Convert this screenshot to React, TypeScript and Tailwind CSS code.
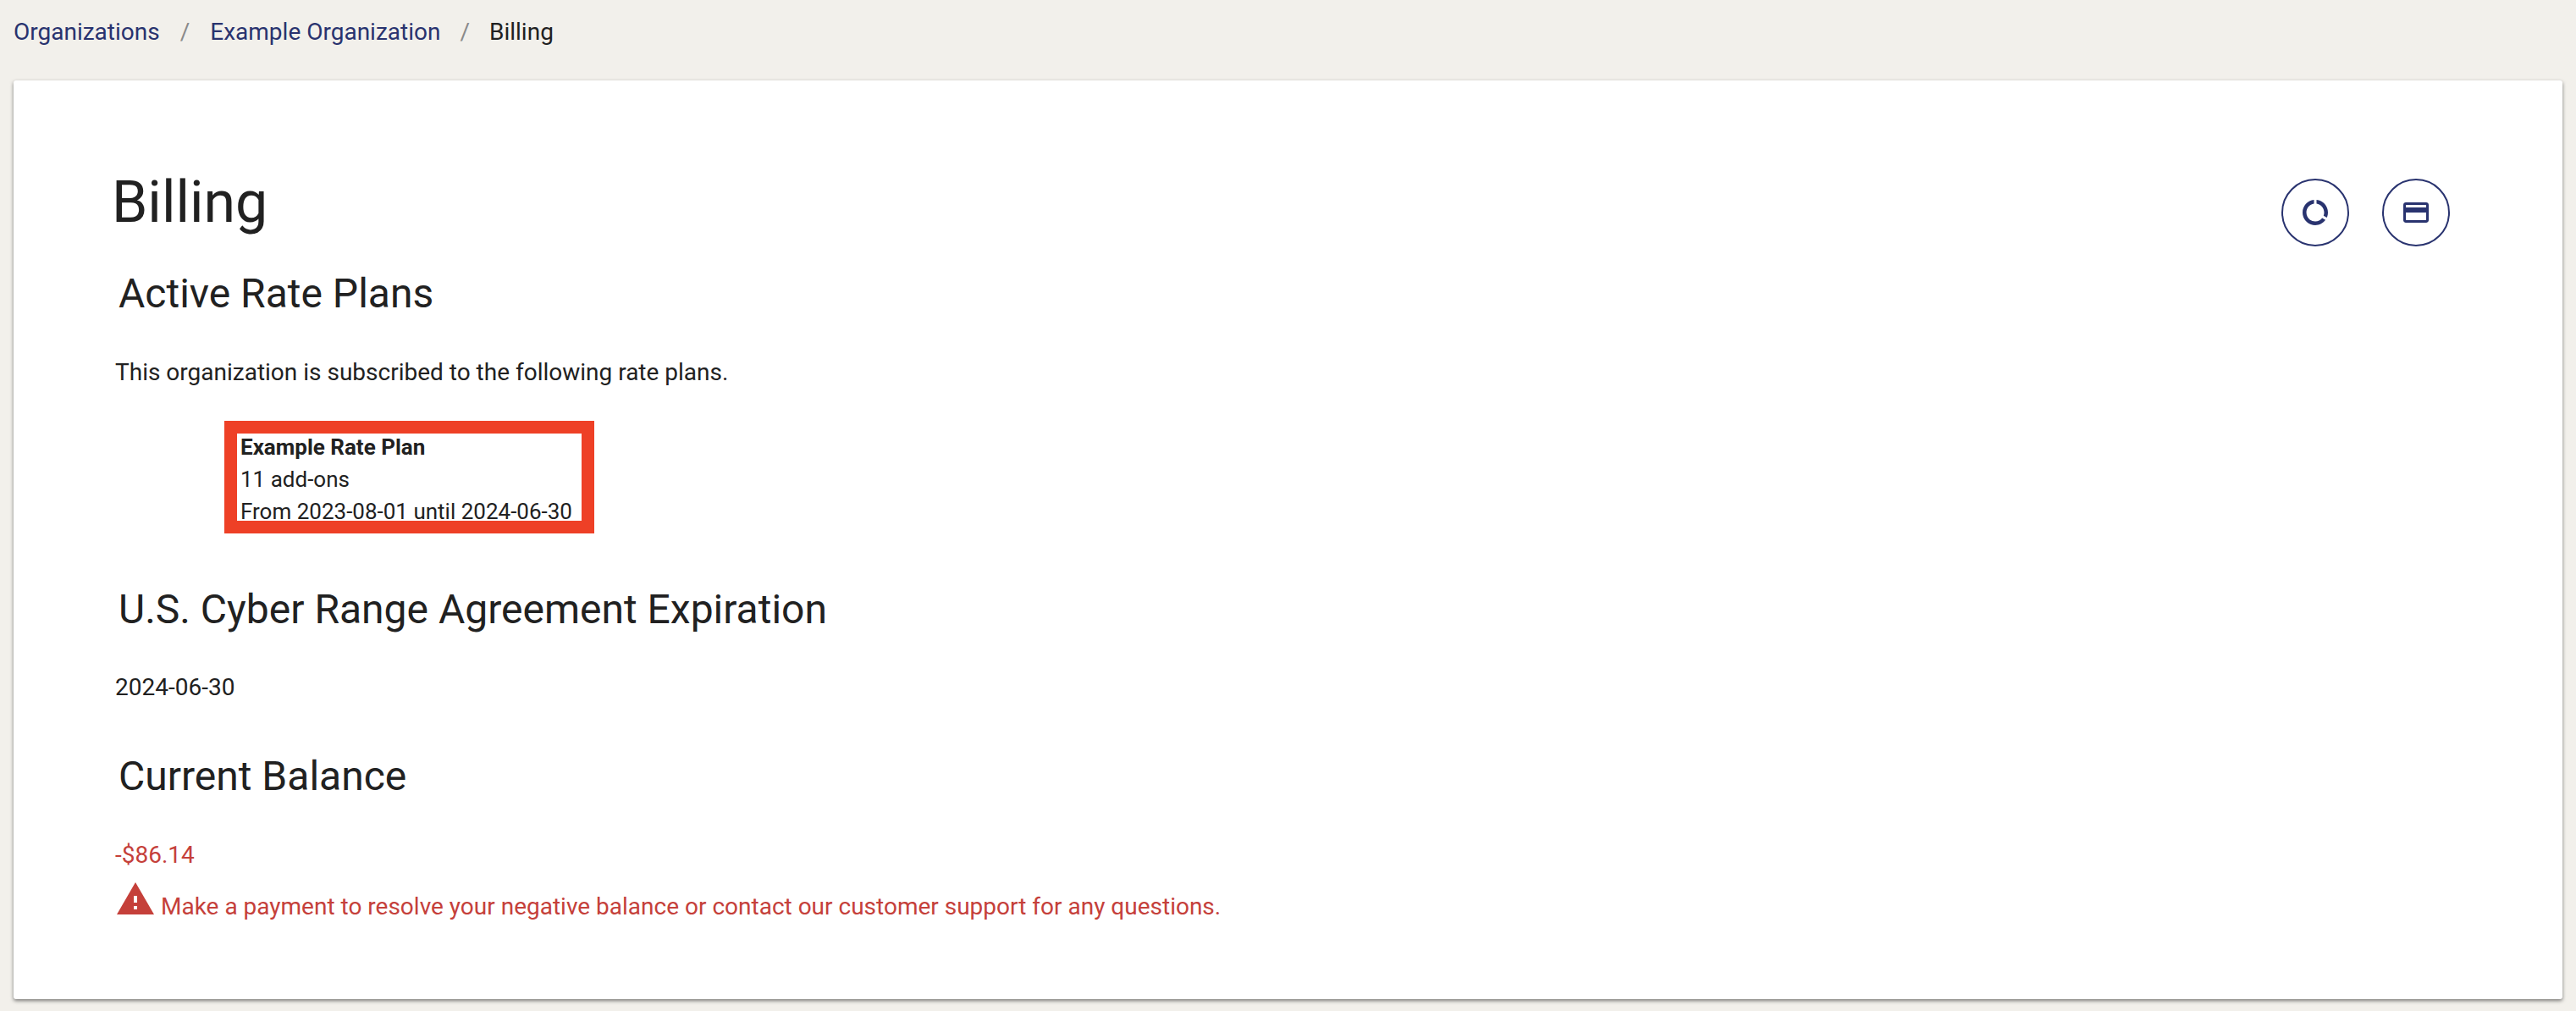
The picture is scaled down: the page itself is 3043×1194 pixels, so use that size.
import { MdDataUsage, MdOutlineCreditCard } from 'react-icons/md'

function Crumbs() {
  return (
    <nav className="flex h-[95px] items-start pl-4 pt-[19px] text-[28px] leading-[38px]">
      <a className="text-[#29336f]">Organizations</a>
      <span className="mx-[24px] text-[#8a8a8a]">/</span>
      <a className="text-[#29336f]">Example Organization</a>
      <span className="mx-[23px] text-[#8a8a8a]">/</span>
      <span>Billing</span>
    </nav>
  )
}

function RoundButton({ children }: { children: React.ReactNode }) {
  return (
    <button className="flex h-20 w-20 items-center justify-center rounded-full border-2 border-[#29336f] text-[#29336f]">
      {children}
    </button>
  )
}

export default function App() {
  return (
    <div className="h-[1194px] bg-[#f2f0eb] font-['Roboto',sans-serif] text-[#212121]">
      <Crumbs />
      <main className="mx-4 h-[1085px] rounded-[3px] bg-white pt-[102px] pl-[120px] pr-[133px] shadow-[0_2px_4px_rgba(0,0,0,0.5)]">
        <div className="-ml-[4px] flex items-start justify-between">
          <h1 className="text-[68px] leading-[84px] font-normal">Billing</h1>
          <div className="mt-[14px] flex gap-[39px]">
            <RoundButton>
              <MdDataUsage size={36} />
            </RoundButton>
            <RoundButton>
              <MdOutlineCreditCard size={36} />
            </RoundButton>
          </div>
        </div>

        <div className="pl-[4px]">
          <h2 className="mt-[28px] text-[48px] leading-[56px]">Active Rate Plans</h2>
        </div>
        <p className="mt-[46px] text-[28px] leading-[38px]">
          This organization is subscribed to the following rate plans.
        </p>

        <div className="mt-[38px] ml-[129px] h-[133px] w-[437px] border-[15px] border-[#ee4026] pl-[4px] text-[26px] leading-[38px]">
          <div className="-mt-[3px]">
            <div className="font-bold">Example Rate Plan</div>
            <div>11 add-ons</div>
            <div>From 2023-08-01 until 2024-06-30</div>
          </div>
        </div>

        <div className="pl-[4px]">
          <h2 className="mt-[62px] text-[48px] leading-[56px]">U.S. Cyber Range Agreement Expiration</h2>
        </div>
        <p className="mt-[45px] text-[28px] leading-[38px]">2024-06-30</p>

        <div className="pl-[4px]">
          <h2 className="mt-[58px] text-[48px] leading-[56px]">Current Balance</h2>
        </div>
        <p className="mt-[46px] text-[28px] leading-[38px] text-[#c5403a]">-$86.14</p>
        <p className="mt-[9px] flex items-end text-[28px] leading-[38px] text-[#c5403a]">
          <svg viewBox="0 0 24 24" width="48" height="48" fill="currentColor" className="mb-[4px] shrink-0">
            <path d="M1 21h22L12 2 1 21zm12-3h-2v-2h2v2zm0-4h-2v-4h2v4z" />
          </svg>
          <span className="ml-[6px]">
            Make a payment to resolve your negative balance or contact our customer support for any questions.
          </span>
        </p>
      </main>
    </div>
  )
}
